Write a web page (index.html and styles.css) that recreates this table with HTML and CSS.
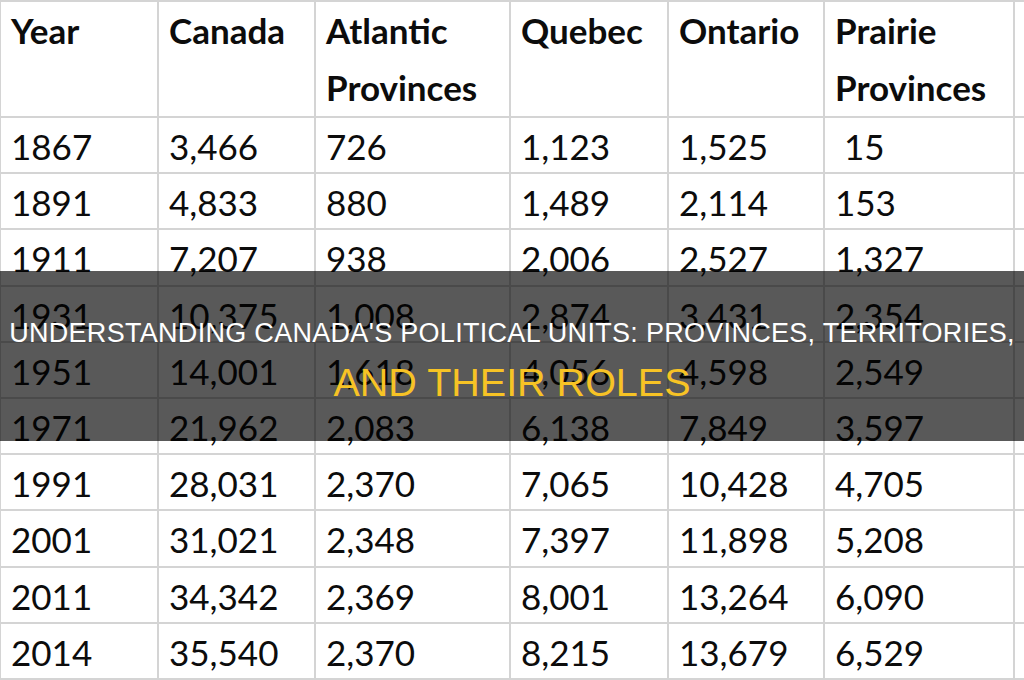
FILE: index.html
```html
<!DOCTYPE html>
<html>
<head>
<meta charset="utf-8">
<link rel="stylesheet" href="styles.css">
</head>
<body>
<div class="page">
  <div class="sheet">
    <div class="cell head">Year</div>
    <div class="cell head">Canada</div>
    <div class="cell head">Atlantic<br>Provinces</div>
    <div class="cell head">Quebec</div>
    <div class="cell head">Ontario</div>
    <div class="cell head">Prairie<br>Provinces</div>
    <div class="cell head"></div>

    <div class="cell">1867</div><div class="cell">3,466</div><div class="cell">726</div><div class="cell">1,123</div><div class="cell">1,525</div><div class="cell">&nbsp;15</div><div class="cell"></div>
    <div class="cell">1891</div><div class="cell">4,833</div><div class="cell">880</div><div class="cell">1,489</div><div class="cell">2,114</div><div class="cell">153</div><div class="cell"></div>
    <div class="cell">1911</div><div class="cell">7,207</div><div class="cell">938</div><div class="cell">2,006</div><div class="cell">2,527</div><div class="cell">1,327</div><div class="cell"></div>
    <div class="cell">1931</div><div class="cell">10,375</div><div class="cell">1,008</div><div class="cell">2,874</div><div class="cell">3,431</div><div class="cell">2,354</div><div class="cell"></div>
    <div class="cell">1951</div><div class="cell">14,001</div><div class="cell">1,618</div><div class="cell">4,056</div><div class="cell">4,598</div><div class="cell">2,549</div><div class="cell"></div>
    <div class="cell">1971</div><div class="cell">21,962</div><div class="cell">2,083</div><div class="cell">6,138</div><div class="cell">7,849</div><div class="cell">3,597</div><div class="cell"></div>
    <div class="cell">1991</div><div class="cell">28,031</div><div class="cell">2,370</div><div class="cell">7,065</div><div class="cell">10,428</div><div class="cell">4,705</div><div class="cell"></div>
    <div class="cell">2001</div><div class="cell">31,021</div><div class="cell">2,348</div><div class="cell">7,397</div><div class="cell">11,898</div><div class="cell">5,208</div><div class="cell"></div>
    <div class="cell">2011</div><div class="cell">34,342</div><div class="cell">2,369</div><div class="cell">8,001</div><div class="cell">13,264</div><div class="cell">6,090</div><div class="cell"></div>
    <div class="cell">2014</div><div class="cell">35,540</div><div class="cell">2,370</div><div class="cell">8,215</div><div class="cell">13,679</div><div class="cell">6,529</div><div class="cell"></div>
  </div>
  <div class="banner">
    <h1 class="title">UNDERSTANDING CANADA'S POLITICAL UNITS: PROVINCES, TERRITORIES,</h1>
    <div class="subtitle">AND THEIR ROLES</div>
  </div>
</div>
</body>
</html>
```

FILE: styles.css
```css
html, body {
  margin: 0;
  padding: 0;
  background: #ffffff;
}

.page {
  position: relative;
  width: 1024px;
  height: 680px;
  overflow: hidden;
}

.sheet {
  display: grid;
  grid-template-columns: 158px 157px 195px 158px 156px 190px 1fr;
  grid-template-rows: 116px repeat(10, 56.2px);
  border-top: 2px solid #d4d4d4;
  border-left: 1px solid #d4d4d4;
  font-family: "Lato", "Open Sans", sans-serif;
  font-size: 35px;
  color: #0c0c0c;
}

.cell {
  box-sizing: border-box;
  border-right: 2px solid #d4d4d4;
  border-bottom: 2px solid #d4d4d4;
  padding: 0 0 0 10px;
  line-height: 56px;
  white-space: nowrap;
  overflow: hidden;
}

.head {
  font-weight: 700;
  line-height: 57px;
}

.banner {
  position: absolute;
  left: 0;
  top: 271px;
  width: 1024px;
  height: 170px;
  box-sizing: border-box;
  padding-top: 46px;
  background: rgba(0, 0, 0, 0.65);
  display: flex;
  flex-direction: column;
  align-items: center;
  font-family: "Liberation Sans", Arial, sans-serif;
}

.title {
  margin: 0;
  font-size: 27px;
  font-weight: 400;
  letter-spacing: 0.3px;
  color: #ffffff;
  line-height: 32px;
  white-space: nowrap;
}

.subtitle {
  margin-top: 11px;
  font-size: 39.5px;
  color: #f7c325;
  line-height: 44px;
  white-space: nowrap;
}
```
